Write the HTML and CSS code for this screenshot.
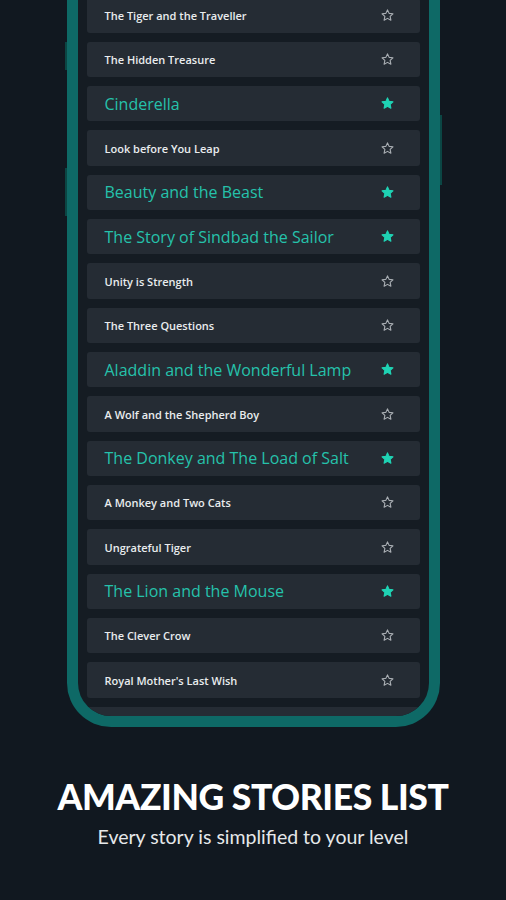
FILE: index.html
```html
<!DOCTYPE html>
<html lang="en">

<head>
	<meta charset="UTF-8" />
	<meta name="viewport" content="width=device-width, initial-scale=1.0" />
	<title>Amazing Stories List</title>
	<link rel="stylesheet" href="styles.css">
</head>

<body>
	<div class="stage">
		<div class="phone">
			<span class="side-btn side-left-1"></span>
			<span class="side-btn side-left-2"></span>
			<span class="side-btn side-right"></span>
			<div class="screen">
				<ul class="stories">
					<li class="story"><span>The Tiger and the Traveller</span><svg class="star" viewBox="0 0 24 24"><path d="M12 3l2.6 5.6 6.1.7-4.5 4.2 1.2 6L12 16.6 6.6 19.5l1.2-6L3.3 9.3l6.1-.7z"/></svg></li>
					<li class="story"><span>The Hidden Treasure</span><svg class="star" viewBox="0 0 24 24"><path d="M12 3l2.6 5.6 6.1.7-4.5 4.2 1.2 6L12 16.6 6.6 19.5l1.2-6L3.3 9.3l6.1-.7z"/></svg></li>
					<li class="story fav"><span>Cinderella</span><svg class="star" viewBox="0 0 24 24"><path d="M12 3l2.6 5.6 6.1.7-4.5 4.2 1.2 6L12 16.6 6.6 19.5l1.2-6L3.3 9.3l6.1-.7z"/></svg></li>
					<li class="story"><span>Look before You Leap</span><svg class="star" viewBox="0 0 24 24"><path d="M12 3l2.6 5.6 6.1.7-4.5 4.2 1.2 6L12 16.6 6.6 19.5l1.2-6L3.3 9.3l6.1-.7z"/></svg></li>
					<li class="story fav"><span>Beauty and the Beast</span><svg class="star" viewBox="0 0 24 24"><path d="M12 3l2.6 5.6 6.1.7-4.5 4.2 1.2 6L12 16.6 6.6 19.5l1.2-6L3.3 9.3l6.1-.7z"/></svg></li>
					<li class="story fav"><span>The Story of Sindbad the Sailor</span><svg class="star" viewBox="0 0 24 24"><path d="M12 3l2.6 5.6 6.1.7-4.5 4.2 1.2 6L12 16.6 6.6 19.5l1.2-6L3.3 9.3l6.1-.7z"/></svg></li>
					<li class="story"><span>Unity is Strength</span><svg class="star" viewBox="0 0 24 24"><path d="M12 3l2.6 5.6 6.1.7-4.5 4.2 1.2 6L12 16.6 6.6 19.5l1.2-6L3.3 9.3l6.1-.7z"/></svg></li>
					<li class="story"><span>The Three Questions</span><svg class="star" viewBox="0 0 24 24"><path d="M12 3l2.6 5.6 6.1.7-4.5 4.2 1.2 6L12 16.6 6.6 19.5l1.2-6L3.3 9.3l6.1-.7z"/></svg></li>
					<li class="story fav"><span>Aladdin and the Wonderful Lamp</span><svg class="star" viewBox="0 0 24 24"><path d="M12 3l2.6 5.6 6.1.7-4.5 4.2 1.2 6L12 16.6 6.6 19.5l1.2-6L3.3 9.3l6.1-.7z"/></svg></li>
					<li class="story"><span>A Wolf and the Shepherd Boy</span><svg class="star" viewBox="0 0 24 24"><path d="M12 3l2.6 5.6 6.1.7-4.5 4.2 1.2 6L12 16.6 6.6 19.5l1.2-6L3.3 9.3l6.1-.7z"/></svg></li>
					<li class="story fav"><span>The Donkey and The Load of Salt</span><svg class="star" viewBox="0 0 24 24"><path d="M12 3l2.6 5.6 6.1.7-4.5 4.2 1.2 6L12 16.6 6.6 19.5l1.2-6L3.3 9.3l6.1-.7z"/></svg></li>
					<li class="story"><span>A Monkey and Two Cats</span><svg class="star" viewBox="0 0 24 24"><path d="M12 3l2.6 5.6 6.1.7-4.5 4.2 1.2 6L12 16.6 6.6 19.5l1.2-6L3.3 9.3l6.1-.7z"/></svg></li>
					<li class="story"><span>Ungrateful Tiger</span><svg class="star" viewBox="0 0 24 24"><path d="M12 3l2.6 5.6 6.1.7-4.5 4.2 1.2 6L12 16.6 6.6 19.5l1.2-6L3.3 9.3l6.1-.7z"/></svg></li>
					<li class="story fav"><span>The Lion and the Mouse</span><svg class="star" viewBox="0 0 24 24"><path d="M12 3l2.6 5.6 6.1.7-4.5 4.2 1.2 6L12 16.6 6.6 19.5l1.2-6L3.3 9.3l6.1-.7z"/></svg></li>
					<li class="story"><span>The Clever Crow</span><svg class="star" viewBox="0 0 24 24"><path d="M12 3l2.6 5.6 6.1.7-4.5 4.2 1.2 6L12 16.6 6.6 19.5l1.2-6L3.3 9.3l6.1-.7z"/></svg></li>
					<li class="story"><span>Royal Mother's Last Wish</span><svg class="star" viewBox="0 0 24 24"><path d="M12 3l2.6 5.6 6.1.7-4.5 4.2 1.2 6L12 16.6 6.6 19.5l1.2-6L3.3 9.3l6.1-.7z"/></svg></li>
					<li class="story"><span></span></li>
				</ul>
			</div>
		</div>
	</div>

	<div class="caption">
		<h1>AMAZING STORIES LIST</h1>
		<p>Every story is simplified to your level</p>
	</div>
</body>

</html>
```

FILE: styles.css
```css
body {
	margin: 0;
	background-color: #111820;
	color: white;
	font-family: "Open Sans", sans-serif;
	height: 900px;
	overflow: hidden;
}

.stage {
	display: flex;
	justify-content: center;
}

/* phone frame, top is cut off by the screenshot */
.phone {
	position: relative;
	width: 373px;
	height: 727px;
	box-sizing: border-box;
	border: 11px solid #0e6966;
	border-top: none;
	border-radius: 0 0 44px 44px;
	background-color: #151c23;
}

.side-btn {
	position: absolute;
	width: 2px;
	background-color: #0b4644;
}

.side-left-1 {
	left: -13px;
	top: 42px;
	height: 28px;
}

.side-left-2 {
	left: -13px;
	top: 168px;
	height: 48px;
}

.side-right {
	right: -13px;
	top: 115px;
	height: 70px;
}

.screen {
	height: 100%;
	overflow: hidden;
	border-radius: 0 0 33px 33px;
}

.stories {
	list-style: none;
	margin: -2.5px 0 0 0;
	padding: 0 9px;
}

.story {
	display: flex;
	align-items: center;
	justify-content: space-between;
	height: 35.33px;
	margin-bottom: 9px;
	padding: 0 25px 0 18px;
	background-color: #252c34;
	border-radius: 3px;
	font-size: 11px;
	font-weight: 600;
	color: #e9ecee;
}

.story.fav {
	font-size: 16px;
	font-weight: 500;
	color: #25c2ab;
	padding-left: 18px;
}

.star {
	width: 15px;
	height: 15px;
	fill: none;
	stroke: #a9aeb3;
	stroke-width: 1.8;
	stroke-linejoin: round;
}

.fav .star {
	fill: #1fd3b4;
	stroke: #1fd3b4;
}

.caption {
	text-align: center;
	margin-top: 50px;
	font-family: "Lato", sans-serif;
}

.caption h1 {
	margin: 0;
	font-size: 35.5px;
	font-weight: 900;
	letter-spacing: -0.4px;
	line-height: 40px;
}

.caption p {
	margin: 8px 0 0 0;
	font-size: 19.5px;
	color: #e6e8ea;
}
```
